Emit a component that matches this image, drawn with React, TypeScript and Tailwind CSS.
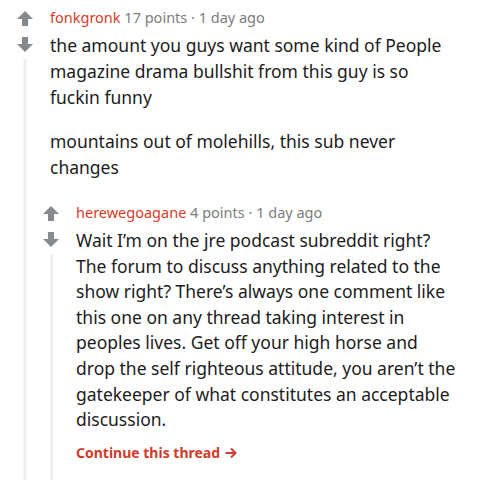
const Up = ({ down = false }: { down?: boolean }) => (
  <svg
    width="16"
    height="15"
    viewBox="0 0 16 15"
    className={down ? "rotate-180" : ""}
    fill="#878a8c"
  >
    <path d="M8 0 L16 8 H11 V15 H5 V8 H0 Z" />
  </svg>
);

const Votes = () => (
  <div className="flex flex-col items-center gap-[11px] pt-[11px]">
    <Up />
    <Up down />
  </div>
);

const Meta = ({ user, points }: { user: string; points: string }) => (
  <div className="h-[18px] text-[14.5px] leading-[18px] text-[#7c7c7c]">
    <span className="text-[#d93a28]">{user}</span> {points} · 1 day ago
  </div>
);

export default function App() {
  return (
    <div
      className="w-[504px] h-[480px] overflow-hidden bg-white text-[#1c1c1c]"
      style={{ fontFamily: '"Noto Sans", "Open Sans", sans-serif' }}
    >
      <div className="flex min-h-[480px]">
        <div className="w-[50px] flex flex-col items-center shrink-0">
          <Votes />
          <div className="mt-[7px] w-[3px] flex-1 bg-[#edeff1] -translate-x-[0.5px]" />
        </div>
        <div className="flex-1 flex flex-col pt-[8px] pr-[46px]">
          <Meta user="fonkgronk" points="17 points" />
          <div className="mt-[6px] text-[17.5px] leading-[26px]">
            <p>
              the amount you guys want some kind of People magazine drama
              bullshit from this guy is so fuckin funny
            </p>
            <p className="mt-[18px]">mountains out of molehills, this sub never changes</p>
          </div>

          <div className="ml-[-24px] mt-[15px] flex flex-1">
            <div className="w-[50px] flex flex-col items-center shrink-0">
              <Votes />
              <div className="mt-[8px] w-[3px] flex-1 bg-[#edeff1]" />
            </div>
            <div className="flex-1 pt-[8px]">
              <Meta user="herewegoagane" points="4 points" />
              <p className="mt-[7px] text-[17.5px] leading-[25.6px]">
                Wait I’m on the jre podcast subreddit right? The forum to discuss
                anything related to the show right? There’s always one comment
                like this one on any thread taking interest in peoples lives. Get
                off your high horse and drop the self righteous attitude, you
                aren’t the gatekeeper of what constitutes an acceptable
                discussion.
              </p>
              <div className="mt-[10px] pb-[30px] flex items-center gap-[5px] text-[14px] leading-[20px] font-bold text-[#d13b2b]">
                <span>Continue this thread</span>
                <svg width="12" height="12" viewBox="0 0 12 12" fill="none" stroke="#d13b2b" strokeWidth="2">
                  <path d="M0.5 6 H10.5 M6 1.5 L10.5 6 L6 10.5" />
                </svg>
              </div>
            </div>
          </div>
        </div>
      </div>
    </div>
  );
}
